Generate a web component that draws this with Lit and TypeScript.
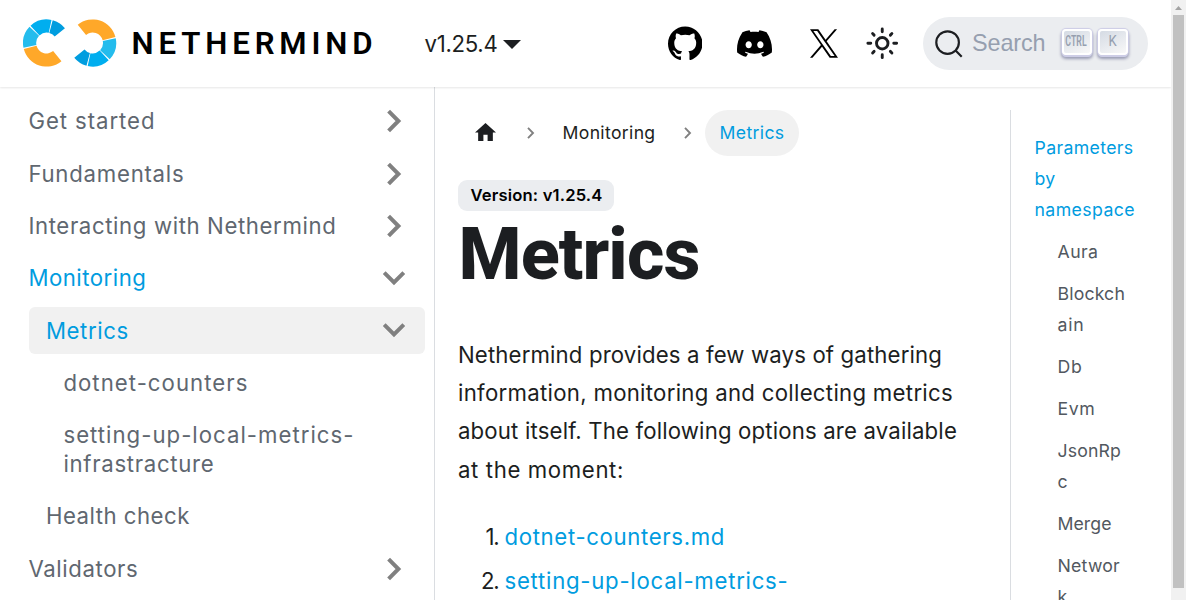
import { LitElement, html, css, svg } from "lit";
import { customElement, property } from "lit/decorators.js";
import { classMap } from "lit/directives/class-map.js";

/** A single line of text whose tracking is adjusted to fill a given width. */
@customElement("fit-text")
class FitText extends LitElement {
  static styles = css`
    :host { display: block; white-space: pre; }
    .line { display: inline-block; }
  `;
  @property() text = "";
  @property({ type: Number }) width = 0;

  firstUpdated() {
    const line = this.renderRoot.querySelector(".line") as HTMLElement;
    const natural = line.getBoundingClientRect().width;
    if (this.width) {
      line.style.letterSpacing = `${(this.width - natural) / this.text.length}px`;
    }
  }
  render() {
    return html`<span class="line">${this.text}</span>`;
  }
}

const fit = (text: string, width: number) =>
  html`<fit-text .text=${text} .width=${width}></fit-text>`;

const arc = (from: number, to: number, color: string) => {
  const pt = (r: number, a: number) => {
    const t = (a * Math.PI) / 180;
    return `${(r * Math.cos(t)).toFixed(2)} ${(-r * Math.sin(t)).toFixed(2)}`;
  };
  return svg`<path fill=${color} d="M${pt(23.6, from)}A23.6 23.6 0 0 0 ${pt(23.6, to)}L${pt(10.4, to)}A10.4 10.4 0 0 1 ${pt(10.4, from)}Z"/>`;
};

const ring = () => svg`
  ${arc(39, 75, "#009ddf")}
  ${arc(78, 133, "#00aeef")}
  ${arc(136.5, 191.5, "#24bced")}
  ${arc(195, 309, "#ffa829")}`;

const logo = html`<svg class="logo" width="94" height="48" viewBox="0 0 94 48">
  <g transform="translate(23.6 24)">${ring()}</g>
  <g transform="translate(69.6 24) rotate(180)">${ring()}</g>
</svg>`;

const github = html`<svg class="github" width="34.5" height="34.5" viewBox="0 0 24 24"><path d="M12 .297c-6.63 0-12 5.373-12 12 0 5.303 3.438 9.8 8.205 11.385.6.113.82-.258.82-.577 0-.285-.01-1.04-.015-2.04-3.338.724-4.042-1.61-4.042-1.61C4.422 18.07 3.633 17.7 3.633 17.7c-1.087-.744.084-.729.084-.729 1.205.084 1.838 1.236 1.838 1.236 1.07 1.835 2.809 1.305 3.495.998.108-.776.417-1.305.76-1.605-2.665-.3-5.466-1.332-5.466-5.93 0-1.31.465-2.38 1.235-3.22-.135-.303-.54-1.523.105-3.176 0 0 1.005-.322 3.3 1.23.96-.267 1.98-.399 3-.405 1.02.006 2.04.138 3 .405 2.28-1.552 3.285-1.23 3.285-1.23.645 1.653.24 2.873.12 3.176.765.84 1.23 1.91 1.23 3.22 0 4.61-2.805 5.625-5.475 5.92.42.36.81 1.096.81 2.22 0 1.606-.015 2.896-.015 3.286 0 .315.21.69.825.57C20.565 22.092 24 17.592 24 12.297c0-6.627-5.373-12-12-12"/></svg>`;

const discord = html`<svg class="discord" width="35" height="35" viewBox="0 0 24 24"><path d="M20.317 4.3698a19.7913 19.7913 0 00-4.8851-1.5152.0741.0741 0 00-.0785.0371c-.211.3753-.4447.8648-.6083 1.2495-1.8447-.2762-3.68-.2762-5.4868 0-.1636-.3933-.4058-.8742-.6177-1.2495a.077.077 0 00-.0785-.037 19.7363 19.7363 0 00-4.8852 1.515.0699.0699 0 00-.0321.0277C.5334 9.0458-.319 13.5799.0992 18.0578a.0824.0824 0 00.0312.0561c2.0528 1.5076 4.0413 2.4228 5.9929 3.0294a.0777.0777 0 00.0842-.0276c.4616-.6304.8731-1.2952 1.226-1.9942a.076.076 0 00-.0416-.1057c-.6528-.2476-1.2743-.5495-1.8722-.8923a.077.077 0 01-.0076-.1277c.1258-.0943.2517-.1923.3718-.2914a.0743.0743 0 01.0776-.0105c3.9278 1.7933 8.18 1.7933 12.0614 0a.0739.0739 0 01.0785.0095c.1202.099.246.1981.3728.2924a.077.077 0 01-.0066.1276 12.2986 12.2986 0 01-1.873.8914.0766.0766 0 00-.0407.1067c.3604.698.7719 1.3628 1.225 1.9932a.076.076 0 00.0842.0286c1.961-.6067 3.9495-1.5219 6.0023-3.0294a.077.077 0 00.0313-.0552c.5004-5.177-.8382-9.6739-3.5485-13.6604a.061.061 0 00-.0312-.0286zM8.02 15.3312c-1.1825 0-2.1569-1.0857-2.1569-2.419 0-1.3332.9555-2.4189 2.157-2.4189 1.2108 0 2.1757 1.0952 2.1568 2.419 0 1.3332-.9555 2.4189-2.1569 2.4189zm7.9748 0c-1.1825 0-2.1569-1.0857-2.1569-2.419 0-1.3332.9554-2.4189 2.1569-2.4189 1.2108 0 2.1757 1.0952 2.1568 2.419 0 1.3332-.946 2.4189-2.1568 2.4189Z"/></svg>`;

const xLogo = html`<svg class="x" width="28" height="29" viewBox="0 0 1200 1227"><path d="M714.163 519.284L1160.89 0H1055.03L667.137 450.887L357.328 0H0L468.492 681.821L0 1226.37H105.866L515.491 750.218L842.672 1226.37H1200L714.137 519.284H714.163ZM569.165 687.828L521.697 619.934L144.011 79.6944H306.615L611.412 515.685L658.88 583.579L1055.08 1150.3H892.476L569.165 687.854V687.828Z"/></svg>`;

const sun = html`<svg class="sun" width="34.5" height="34.5" viewBox="0 0 24 24" fill="none" stroke="#1c1e21" stroke-width="2" stroke-linecap="round">
  <circle cx="12" cy="12" r="4"/>
  <path d="M2 12h2M20 12h2M12 2v2M12 20v2M5.28 5.28l1.06 1.06M17.66 17.66l1.06 1.06M5.28 18.72l1.06-1.06M17.66 6.34l1.06-1.06"/>
</svg>`;

const magnifier = html`<svg class="magnifier" width="30" height="30" viewBox="0 0 20 20" fill="none" stroke="#1c1e21" stroke-width="1.45"><path d="M14.386 14.386l4.0877 4.0877-4.0877-4.0877c-2.9418 2.9419-7.7115 2.9419-10.6533 0-2.9419-2.9418-2.9419-7.7115 0-10.6533 2.9418-2.9419 7.7115-2.9419 10.6533 0 2.9419 2.9418 2.9419 7.7115 0 10.6533z"/></svg>`;

const chevron = (open: boolean) => html`<svg class=${classMap({ chevron: true, open })} width="28" height="28" viewBox="0 0 28 28" fill="none" stroke="#808080" stroke-width="4"><path d="M8.6 4.2L18.4 14L8.6 23.8"/></svg>`;

const crumbArrow = html`<svg class="sep" width="8" height="12" viewBox="0 0 8 12" fill="none" stroke="#808080" stroke-width="1.9"><path d="M1 .9L6 6L1 11.1"/></svg>`;

interface Item {
  lines: [string, number][];
  level: number;
  arrow?: "closed" | "open";
  active?: boolean;
  current?: boolean;
}

const menu: Item[] = [
  { lines: [["Get started", 127]], level: 0, arrow: "closed" },
  { lines: [["Fundamentals", 156]], level: 0, arrow: "closed" },
  { lines: [["Interacting with Nethermind", 308]], level: 0, arrow: "closed" },
  { lines: [["Monitoring", 118]], level: 0, arrow: "open", active: true },
  { lines: [["Metrics", 83]], level: 1, arrow: "open", active: true, current: true },
  { lines: [["dotnet-counters", 185]], level: 2 },
  { lines: [["setting-up-local-metrics-", 291], ["infrastracture", 151]], level: 2 },
  { lines: [["Health check", 144]], level: 1 },
  { lines: [["Validators", 110]], level: 0, arrow: "closed" },
];

const toc: [string, number][][] = [
  [["Aura", 41]],
  [["Blockch", 67.5], ["ain", 27]],
  [["Db", 25]],
  [["Evm", 38]],
  [["JsonRp", 63.5], ["c", 11]],
  [["Merge", 54]],
  [["Networ", 62.5], ["k", 10]],
];

@customElement("app-root")
class AppRoot extends LitElement {
  static styles = css`
    :host {
      display: flex; width: 1186px; height: 600px; overflow: hidden; background: #fff;
      font-family: Inter, "Liberation Sans", sans-serif; color: #1c1e21; font-size: 22.2px;
    }
    * { box-sizing: border-box; }
    svg { display: block; flex: none; }
    .page { width: 1171px; height: 600px; display: flex; flex-direction: column; overflow: hidden; }
    .navbar {
      height: 87px; flex: none; display: flex; align-items: center; padding: 0 23px 1px 22.5px;
      box-shadow: 0 1px 2px rgba(0, 0, 0, 0.1); z-index: 1;
    }
    .logo { margin-top: 0.8px; }
    .brand { font: 600 31.2px/40px Roboto, sans-serif; color: #000; margin: 2px 0 0 15px; width: 276px; }
    .version { display: flex; align-items: center; gap: 5px; margin-left: 17px; width: 243px; }
    .caret { border: solid transparent; border-width: 9px 9px 0; border-top-color: #1c1e21; margin-top: 3px; }
    .github, .x, .sun { margin-top: 1px; }
    .discord { margin-left: 34.5px; margin-top: 1px; }
    .x { margin-left: 38px; }
    .sun { margin-left: 27px; }
    .search {
      margin-left: auto; width: 225px; height: 53px; border-radius: 27px; background: #ebedf0; margin-top: 1px;
      display: flex; align-items: center; padding-left: 11px;
    }
    .placeholder { font: 23.4px/40px "Liberation Sans", sans-serif; color: #969faf; margin: -2px 0 0 8px; width: 89.5px; }
    .key {
      width: 30px; height: 26px; border-radius: 4px; margin: -3px 6px 0 0; color: #969faf;
      background: linear-gradient(-26.5deg, #f8f8f8, #d5dbe4); border: 2px solid #fff;
      box-shadow: 0 2px 0 #cdcde6, 0 0 1px 1px #cdcde6, 0 3px 3px 1px rgba(30, 35, 90, 0.4);
      display: flex; align-items: center; justify-content: center; font: 600 14.5px/20px Roboto, sans-serif;
    }
    .narrow { transform: scaleX(0.6); letter-spacing: 0.2px; }
    .letter { transform: scale(0.9, 1.05); font-weight: 400; }
    .body { flex: 1; display: flex; min-height: 0; }
    .sidebar {
      width: 435px; flex: none; border-right: 1px solid #dadde1; padding: 11px 9px 0 29px;
      display: flex; flex-direction: column; gap: 5.6px; color: #606770;
    }
    .item {
      flex: none; min-height: 46.7px; display: flex; align-items: center; justify-content: space-between;
      line-height: 29px; border-radius: 6px; padding: 0 17px 0 0;
    }
    .wide { min-height: 75.6px; }
    .l1 { padding-left: 17.5px; }
    .l2 { padding-left: 35px; }
    .active { color: #009cdf; }
    .current { background: #f1f1f1; }
    .open { transform: rotate(90deg); }
    .label { margin: -0.8px 0 0 -0.6px; }
    .main { width: 575px; flex: none; padding: 23px 0 0 23px; }
    .crumbs { display: flex; align-items: center; height: 46px; font-size: 17.6px; line-height: 28px; }
    .home { margin: -4px 0 0 17px; }
    .sep { margin-left: 31px; }
    .monitoring { margin-left: 27.5px; width: 94px; }
    .monitoring + .sep { margin-left: 27.5px; }
    .pill {
      margin-left: 13px; width: 94px; height: 46px; border-radius: 23px; background: #f1f1f1; color: #009cdf;
      display: flex; align-items: center; justify-content: center;
    }
    .badge {
      margin-top: 24px; width: 156px; height: 31px; border-radius: 9px; background: #ebedf0; color: #000;
      font-weight: 600; font-size: 16.6px; line-height: 31px; padding-left: 12.5px;
    }
    .title { margin: 2px 0 0 0.5px; font: 800 72px/84px Roboto, sans-serif; }
    .para { margin-top: 39px; line-height: 38.2px; }
    .list { margin-top: 29px; line-height: 38.2px; display: grid; gap: 5.6px; }
    .entry { display: grid; grid-template-columns: 40.5px auto; column-gap: 6px; }
    .num { text-align: right; letter-spacing: -1.2px; }
    .link { color: #009cdf; }
    .toc {
      margin: 23px 0 0; border-left: 1px solid #dadde1; flex: 1; padding: 22px 0 0 23.5px;
      font-size: 17.7px; line-height: 31px; color: #525860;
    }
    .group { margin: 11px 0 0 23px; }
    .scroll { width: 15px; height: 600px; background: #f1f1f1; display: flex; flex-direction: column; align-items: center; }
    .thumb { width: 11px; height: 573px; background: #c1c1c1; }
    .up { height: 15px; }
  `;

  render() {
    return html`
      <div class="page">
        <header class="navbar">
          ${logo}
          <div class="brand">${fit("NETHERMIND", 246)}</div>
          <div class="version">${fit("v1.25.4", 73)}<i class="caret"></i></div>
          ${github}${discord}${xLogo}${sun}
          <div class="search">
            ${magnifier}
            <div class="placeholder">${fit("Search", 73.5)}</div>
            <div class="key"><span class="narrow">CTRL</span></div>
            <div class="key"><span class="letter">K</span></div>
          </div>
        </header>
        <div class="body">
          <nav class="sidebar">
            ${menu.map((m) => html`
              <div class=${classMap({
                item: true, l1: m.level === 1, l2: m.level === 2, wide: m.lines.length > 1,
                active: !!m.active, current: !!m.current,
              })}>
                <div class="label">${m.lines.map(([t, w]) => fit(t, w))}</div>
                ${m.arrow ? chevron(m.arrow === "open") : ""}
              </div>`)}
          </nav>
          <main class="main">
            <div class="crumbs">
              <svg class="home" width="21" height="19" viewBox="0 0 20 18" fill="#1c1e21"><path d="M8 18v-6h4v6h5v-8h3L10 1 0 10h3v8z"/></svg>
              ${crumbArrow}
              <div class="monitoring">${fit("Monitoring", 93)}</div>
              ${crumbArrow}
              <div class="pill">${fit("Metrics", 65)}</div>
            </div>
            <div class="badge">${fit("Version: v1.25.4", 132)}</div>
            <h1 class="title">${fit("Metrics", 241)}</h1>
            <div class="para">
              ${fit("Nethermind provides a few ways of gathering", 484)}
              ${fit("information, monitoring and collecting metrics", 495)}
              ${fit("about itself. The following options are available", 499)}
              ${fit("at the moment:", 166)}
            </div>
            <div class="list">
              <div class="entry"><span class="num">1.</span><div class="link">${fit("dotnet-counters.md", 220.5)}</div></div>
              <div class="entry"><span class="num">2.</span><div class="link">${fit("setting-up-local-metrics-", 284)}</div></div>
            </div>
          </main>
          <aside class="toc">
            <div class="link">${fit("Parameters", 99)}${fit("by", 21)}${fit("namespace", 100.5)}</div>
            ${toc.map((g) => html`<div class="group">${g.map(([t, w]) => fit(t, w))}</div>`)}
          </aside>
        </div>
      </div>
      <div class="scroll">
        <svg class="up" width="15" height="15" viewBox="0 0 15 15"><path fill="#a3a3a3" d="M4 10L7.5 6L11 10z"/></svg>
        <div class="thumb"></div>
      </div>`;
  }
}
